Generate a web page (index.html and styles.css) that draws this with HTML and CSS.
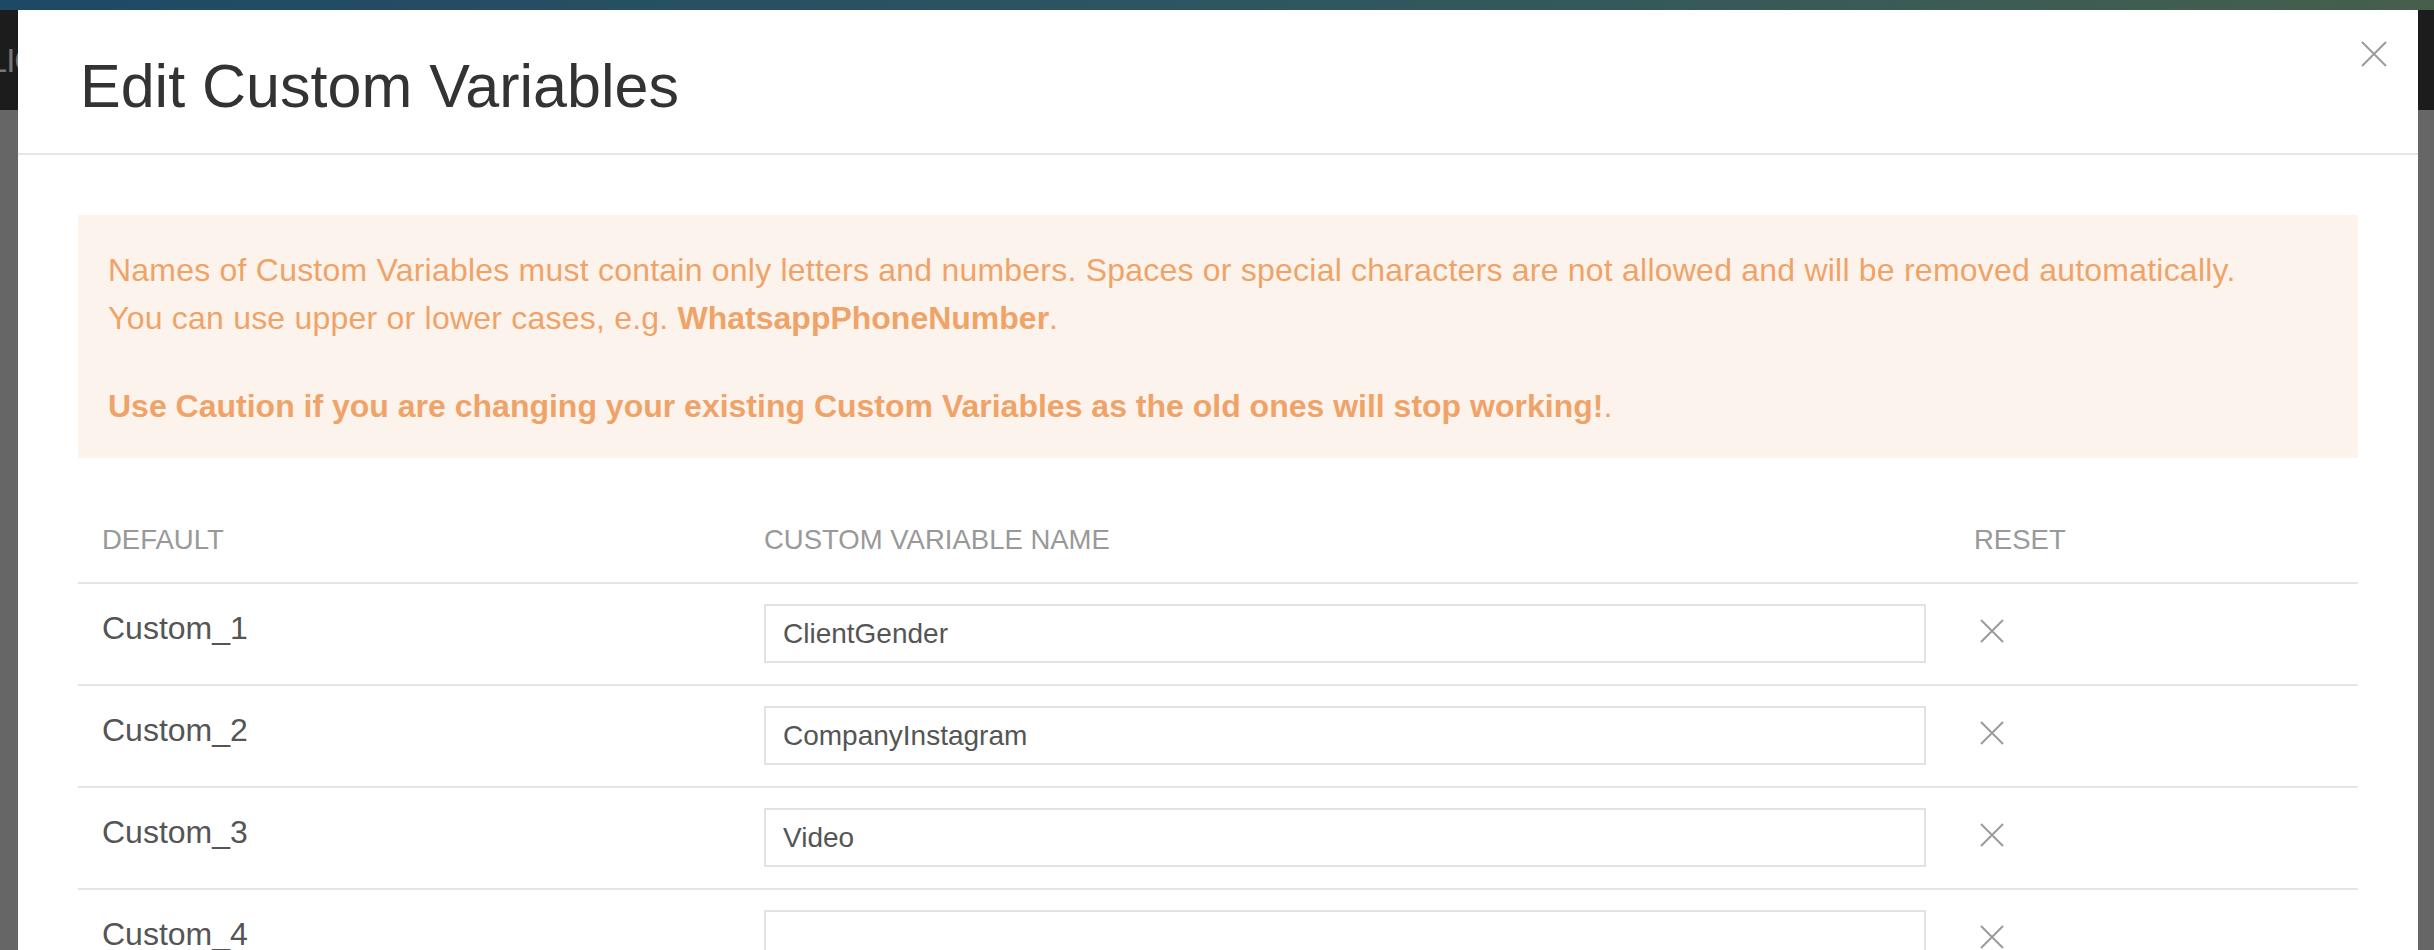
FILE: index.html
```html
<!DOCTYPE html>
<html lang="en">
<head>
  <meta charset="UTF-8">
  <title>Edit Custom Variables</title>
  <link rel="stylesheet" href="styles.css">
</head>
<body>
  <div class="topbar"></div>
  <div class="navbar"><span class="brand">PUBLIC</span></div>

  <div class="modal">
    <div class="modal-header">
      <h1>Edit Custom Variables</h1>
      <button class="close" aria-label="Close">
        <svg width="26" height="26" viewBox="0 0 26 26"><path d="M1 1 L25 25 M25 1 L1 25" stroke="#9b9b9b" stroke-width="2" fill="none"/></svg>
      </button>
    </div>

    <div class="modal-body">
      <div class="alert">
        <p>Names of Custom Variables must contain only letters and numbers. Spaces or special characters are not allowed and will be removed automatically.<br>
        You can use upper or lower cases, e.g. <b>WhatsappPhoneNumber</b>.</p>
        <p><b>Use Caution if you are changing your existing Custom Variables as the old ones will stop working!</b>.</p>
      </div>

      <table class="vars">
        <thead>
          <tr>
            <th class="col-default">Default</th>
            <th class="col-name">Custom Variable Name</th>
            <th class="col-reset">Reset</th>
          </tr>
        </thead>
        <tbody>
          <tr>
            <td>Custom_1</td>
            <td><input type="text" value="ClientGender"></td>
            <td><button class="reset"><svg width="24" height="24" viewBox="0 0 24 24"><path d="M1 1 L23 23 M23 1 L1 23" stroke="#9b9b9b" stroke-width="2" fill="none"/></svg></button></td>
          </tr>
          <tr>
            <td>Custom_2</td>
            <td><input type="text" value="CompanyInstagram"></td>
            <td><button class="reset"><svg width="24" height="24" viewBox="0 0 24 24"><path d="M1 1 L23 23 M23 1 L1 23" stroke="#9b9b9b" stroke-width="2" fill="none"/></svg></button></td>
          </tr>
          <tr>
            <td>Custom_3</td>
            <td><input type="text" value="Video"></td>
            <td><button class="reset"><svg width="24" height="24" viewBox="0 0 24 24"><path d="M1 1 L23 23 M23 1 L1 23" stroke="#9b9b9b" stroke-width="2" fill="none"/></svg></button></td>
          </tr>
          <tr>
            <td>Custom_4</td>
            <td><input type="text" value=""></td>
            <td><button class="reset"><svg width="24" height="24" viewBox="0 0 24 24"><path d="M1 1 L23 23 M23 1 L1 23" stroke="#9b9b9b" stroke-width="2" fill="none"/></svg></button></td>
          </tr>
        </tbody>
      </table>
    </div>
  </div>
</body>
</html>
```

FILE: styles.css
```css
body {
  margin: 0;
  height: 950px;
  overflow: hidden;
  background-color: #666;
  font-family: "Liberation Sans", Arial, Helvetica, sans-serif;
}
.topbar {
  height: 10px;
  background: linear-gradient(90deg, #1f4866, #2c5660 50%, #465f4d);
}
.navbar {
  height: 100px;
  background-color: #1c1c1c;
  overflow: hidden;
  white-space: nowrap;
}
.brand {
  display: inline-block;
  margin-left: -76px;
  margin-top: 32px;
  font-size: 33px;
  letter-spacing: -1px;
  color: #777;
}
.modal {
  position: absolute;
  top: 10px;
  left: 18px;
  width: 2400px;
  bottom: 0;
  background: #fff;
}
.modal-header {
  position: relative;
  height: 145px;
  border-bottom: 2px solid #e5e5e5;
  box-sizing: border-box;
}
.modal-header h1 {
  margin: 0;
  padding: 40px 0 0 62px;
  font-size: 61px;
  font-weight: normal;
  line-height: 72px;
  color: #333;
}
.close {
  position: absolute;
  top: 31px;
  right: 31px;
  padding: 0;
  border: none;
  background: none;
  line-height: 0;
}
.modal-body {
  padding: 60px;
}
.alert {
  background-color: #fcf4ec;
  color: #f0a368;
  font-size: 32px;
  line-height: 48px;
  padding: 31px 30px 28px;
}
.alert p {
  margin: 0;
  letter-spacing: 0.22px;
}
.alert p + p {
  margin-top: 40px;
}
.alert b {
  letter-spacing: 0;
}
.vars {
  width: 100%;
  margin-top: 40px;
  border-collapse: collapse;
}
.vars th {
  text-align: left;
  font-weight: normal;
  text-transform: uppercase;
  font-size: 27.5px;
  line-height: 42px;
  color: #999;
  padding: 21px 24px;
  border-bottom: 2px solid #e5e5e5;
}
.col-default {
  width: 614px;
}
.col-name {
  width: 1162px;
}
.vars td {
  vertical-align: top;
  padding: 20px 24px 21px;
  font-size: 32px;
  line-height: 48px;
  color: #555;
  border-bottom: 2px solid #e5e5e5;
}
.vars input {
  display: block;
  width: 100%;
  height: 59px;
  box-sizing: border-box;
  border: 2px solid #e2e2e2;
  padding: 0 17px;
  font-family: inherit;
  font-size: 28px;
  color: #555;
  outline: none;
}
.reset {
  margin: 15px 0 0 6px;
  padding: 0;
  border: none;
  background: none;
  line-height: 0;
}
```
